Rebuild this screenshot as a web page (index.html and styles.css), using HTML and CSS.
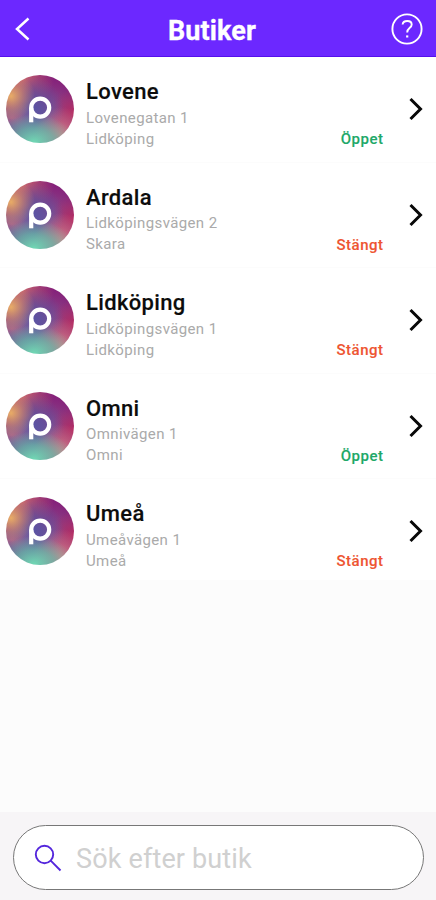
FILE: index.html
```
<!DOCTYPE html>
<html lang="sv">
<head>
<meta charset="utf-8">
<title>Butiker</title>
<link rel="stylesheet" href="styles.css">
</head>
<body>
<svg class="defs" width="0" height="0" aria-hidden="true">
  <symbol id="p" viewBox="0 0 24 28"><path d="M3.2 27.3V12.6" fill="none" stroke="#fff" stroke-width="4.2"/><circle cx="12.2" cy="12.6" r="9" fill="none" stroke="#fff" stroke-width="4.2"/></symbol>
  <symbol id="chev" viewBox="0 0 14 24"><path d="M1.5 2L11.5 12L1.5 22" fill="none" stroke="#080808" stroke-width="3"/></symbol>
</svg>
<div class="app">
  <header class="bar">
    <svg class="back" viewBox="0 0 15 24"><path d="M13.5 1.5L2 12L13.5 22.5" fill="none" stroke="#fff" stroke-width="2.5"/></svg>
    <h1>Butiker</h1>
    <svg class="help" viewBox="0 0 32 32" fill="none" stroke="#fff" stroke-width="1.9"><circle cx="16" cy="16" r="14.6"/><path d="M11.6 11.5C12 6.8 20.6 6.7 20.7 11.5C20.8 15 16.2 14.6 16.2 19.5"/><path d="M16.2 22.4v2.1" stroke-width="2.2"/></svg>
  </header>
  <main class="list">
    <div class="row"><div class="logo"><svg><use href="#p"/></svg></div><div class="info"><h2>Lovene</h2><p>Lovenegatan 1</p><p>Lidköping</p></div><span class="status open">Öppet</span><svg class="chev"><use href="#chev"/></svg></div>
    <div class="row"><div class="logo"><svg><use href="#p"/></svg></div><div class="info"><h2>Ardala</h2><p>Lidköpingsvägen 2</p><p>Skara</p></div><span class="status">Stängt</span><svg class="chev"><use href="#chev"/></svg></div>
    <div class="row"><div class="logo"><svg><use href="#p"/></svg></div><div class="info"><h2>Lidköping</h2><p>Lidköpingsvägen 1</p><p>Lidköping</p></div><span class="status">Stängt</span><svg class="chev"><use href="#chev"/></svg></div>
    <div class="row"><div class="logo"><svg><use href="#p"/></svg></div><div class="info"><h2>Omni</h2><p>Omnivägen 1</p><p>Omni</p></div><span class="status open">Öppet</span><svg class="chev"><use href="#chev"/></svg></div>
    <div class="row"><div class="logo"><svg><use href="#p"/></svg></div><div class="info"><h2>Umeå</h2><p>Umeåvägen 1</p><p>Umeå</p></div><span class="status">Stängt</span><svg class="chev"><use href="#chev"/></svg></div>
  </main>
  <footer class="foot">
    <div class="search"><svg viewBox="0 0 28 28" fill="none" stroke="#5426dc" stroke-width="1.9"><circle cx="10.5" cy="10.5" r="8.7"/><path d="M16.7 16.7L26.5 26.5"/></svg><span>Sök efter butik</span></div>
  </footer>
</div>
</body>
</html>
```
FILE: styles.css
```
* { box-sizing: border-box; margin: 0; padding: 0; }
body { font-family: Roboto, "Liberation Sans", sans-serif; background: #fcfcfc; }
.defs { display: block; }
.app { display: flex; flex-direction: column; height: 900px; width: 436px; overflow: hidden; }
.bar { height: 57px; flex: none; display: flex; align-items: center; justify-content: space-between; padding: 2px 13px 0 15px; background: #6c28ff; border-bottom: 1px solid #5510ec; }
.back { width: 15px; height: 24px; }
.bar h1 { font-size: 27px; line-height: 32px; font-weight: 700; color: #fff; letter-spacing: 0.1px; padding-top: 3px; margin-right: 13px; -webkit-text-stroke: 0.3px #fff; }
.bar .help { width: 32px; height: 32px; margin-left: -16px; }
.list { flex: 1; }
.row { height: 104.5px; margin-bottom: 1px; display: flex; align-items: flex-start; background: #fff; padding: 18px 13px 0 6px; }
.row:last-child { height: 101px; }
.logo { width: 68px; height: 68px; border-radius: 50%; flex: none; display: flex; align-items: center; justify-content: center;
  background:
    radial-gradient(circle 24px at 5px 21px, #e8ac66 0, #dc8f6999 50%, transparent 100%),
    radial-gradient(ellipse 40px 28px at 28px 67px, #70d8b4 0, #66bfaabb 50%, transparent 100%),
    radial-gradient(circle 28px at 55px 60px, #d87c86 0, #cc6a8099 50%, transparent 100%),
    radial-gradient(ellipse 28px 16px at 6px 43px, #a5688b 0, #8a669799 50%, transparent 100%),
    radial-gradient(circle 34px at 24px 35px, #5656a8 0, #5a509fbb 45%, transparent 100%),
    radial-gradient(circle 32px at 16px 4px, #d46769 0, #b8566f99 50%, transparent 100%),
    radial-gradient(circle 24px at 68px 38px, #b52b62 0, transparent 100%),
    radial-gradient(circle 42px at 42px 45px, #8e6598 0, #8c548d88 55%, transparent 100%),
    #85207a; }
.logo svg { width: 24px; height: 28px; }
.info { flex: 1; padding: 3px 0 0 12px; }
.info h2 { font-size: 22px; line-height: 28px; font-weight: 500; color: #0c0c0c; letter-spacing: 0.35px; margin-bottom: 1.5px; -webkit-text-stroke: 0.15px #0c0c0c; }
.info p { font-size: 15px; line-height: 21.3px; color: #aaa; letter-spacing: 0.38px; white-space: nowrap; }
.status { font-size: 15px; line-height: 21px; font-weight: 500; color: #ee5532; letter-spacing: 0.5px; margin: 54px 25.5px 0 0; -webkit-text-stroke: 0.1px currentColor; }
.status.open { color: #20a868; }
.chev { width: 14px; height: 24px; margin-top: 22px; }
.foot { height: 88px; flex: none; background: #f7f5f7; padding: 13px 12px 10px 13px; }
.search { height: 65px; border: 1px solid #777; border-radius: 33px; background: #fff; display: flex; align-items: center; padding-left: 20px; }
.search svg { width: 28px; height: 28px; }
.search span { font-size: 27px; line-height: 32px; color: #d0d0d0; margin-left: 14px; padding-top: 3px; letter-spacing: 0.15px; }
```
